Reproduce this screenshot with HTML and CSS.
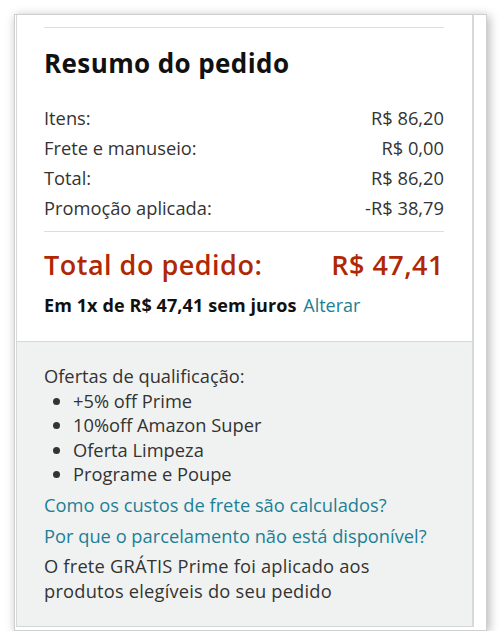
FILE: index.html
```html
<!DOCTYPE html>
<html lang="pt-BR">
  <head>
    <meta charset="UTF-8" />
    <meta name="viewport" content="width=device-width, initial-scale=1.0" />
    <title>Resumo do pedido</title>
    <link rel="stylesheet" href="styles.css">
  </head>
  <body>
    <div class="frame">
      <div class="summary">
        <div class="summary-top">
          <hr class="divider" />
          <h3>Resumo do pedido</h3>

          <div class="line-items">
            <div class="row">
              <span>Itens:</span>
              <span>R$ 86,20</span>
            </div>
            <div class="row">
              <span>Frete e manuseio:</span>
              <span>R$ 0,00</span>
            </div>
            <div class="row">
              <span>Total:</span>
              <span>R$ 86,20</span>
            </div>
            <div class="row">
              <span>Promoção aplicada:</span>
              <span>-R$ 38,79</span>
            </div>
          </div>

          <hr class="divider" />

          <div class="row grand-total">
            <span>Total do pedido:</span>
            <span>R$ 47,41</span>
          </div>
          <p class="installments">
            <strong>Em 1x de R$ 47,41 sem juros</strong>
            <a href="#">Alterar</a>
          </p>
        </div>

        <div class="summary-info">
          <p>Ofertas de qualificação:</p>
          <ul>
            <li>+5% off Prime</li>
            <li>10%off Amazon Super</li>
            <li>Oferta Limpeza</li>
            <li>Programe e Poupe</li>
          </ul>
          <a class="help-link" href="#">Como os custos de frete são calculados?</a>
          <a class="help-link" href="#">Por que o parcelamento não está disponível?</a>
          <p class="prime-note">
            O frete GRÁTIS Prime foi aplicado aos<br />
            produtos elegíveis do seu pedido
          </p>
        </div>
      </div>
    </div>
  </body>
</html>
```

FILE: styles.css
```css
body {
  font-family: "Open Sans", "Noto Sans", Arial, sans-serif;
  background-color: #ffffff;
  color: #222;
  margin: 0;
  padding: 0;
}

.frame {
  box-sizing: border-box;
  width: 473px;
  height: 617px;
  margin: 14px 0 0 14px;
  padding: 0 12px 3px 1px;
  background: #ffffff;
  border: 1px solid #cfcfcf;
  box-shadow: 2px 2px 10px rgba(0, 0, 0, 0.3);
  overflow: hidden;
}

.summary {
  box-sizing: border-box;
  height: 100%;
  border: 1px solid #d5d9d9;
  border-top: none;
  border-right-width: 2px;
  display: flex;
  flex-direction: column;
}

.summary-top {
  padding: 12px 28px 24px 27px;
  border-bottom: 1px solid #d5d9d9;
}

.divider {
  border: none;
  border-top: 1px solid #dddddd;
  margin: 0;
}

.summary-top h3 {
  font-size: 26px;
  font-weight: 700;
  letter-spacing: 0.4px;
  color: #111;
  margin: 19px 0 24px;
  line-height: 32px;
}

.line-items {
  margin-bottom: 8px;
}

.row {
  display: flex;
  justify-content: space-between;
  font-size: 18.3px;
  line-height: 30px;
  color: #333;
}

.grand-total {
  font-size: 27px;
  font-weight: 600;
  letter-spacing: 0.5px;
  color: #b12704;
  line-height: 36px;
  margin-top: 15px;
}

.installments {
  font-size: 18px;
  margin: 10px 0 0;
  line-height: 24px;
  color: #111;
}

a {
  color: #1c7f94;
  text-decoration: none;
}

.installments strong {
  font-weight: 700;
  letter-spacing: 0.1px;
  margin-right: 2px;
}

.summary-info {
  flex: 1;
  background-color: #f0f2f2;
  padding: 22px 28px 0 27px;
  font-size: 18.3px;
  line-height: 24.5px;
  color: #333;
}

.summary-info p {
  margin: 0;
}

.summary-info ul {
  margin: 0;
  padding-left: 29px;
}

.help-link {
  display: block;
  margin-top: 6.5px;
}

.prime-note {
  margin-top: 5.5px !important;
  letter-spacing: 0.2px;
}
```
